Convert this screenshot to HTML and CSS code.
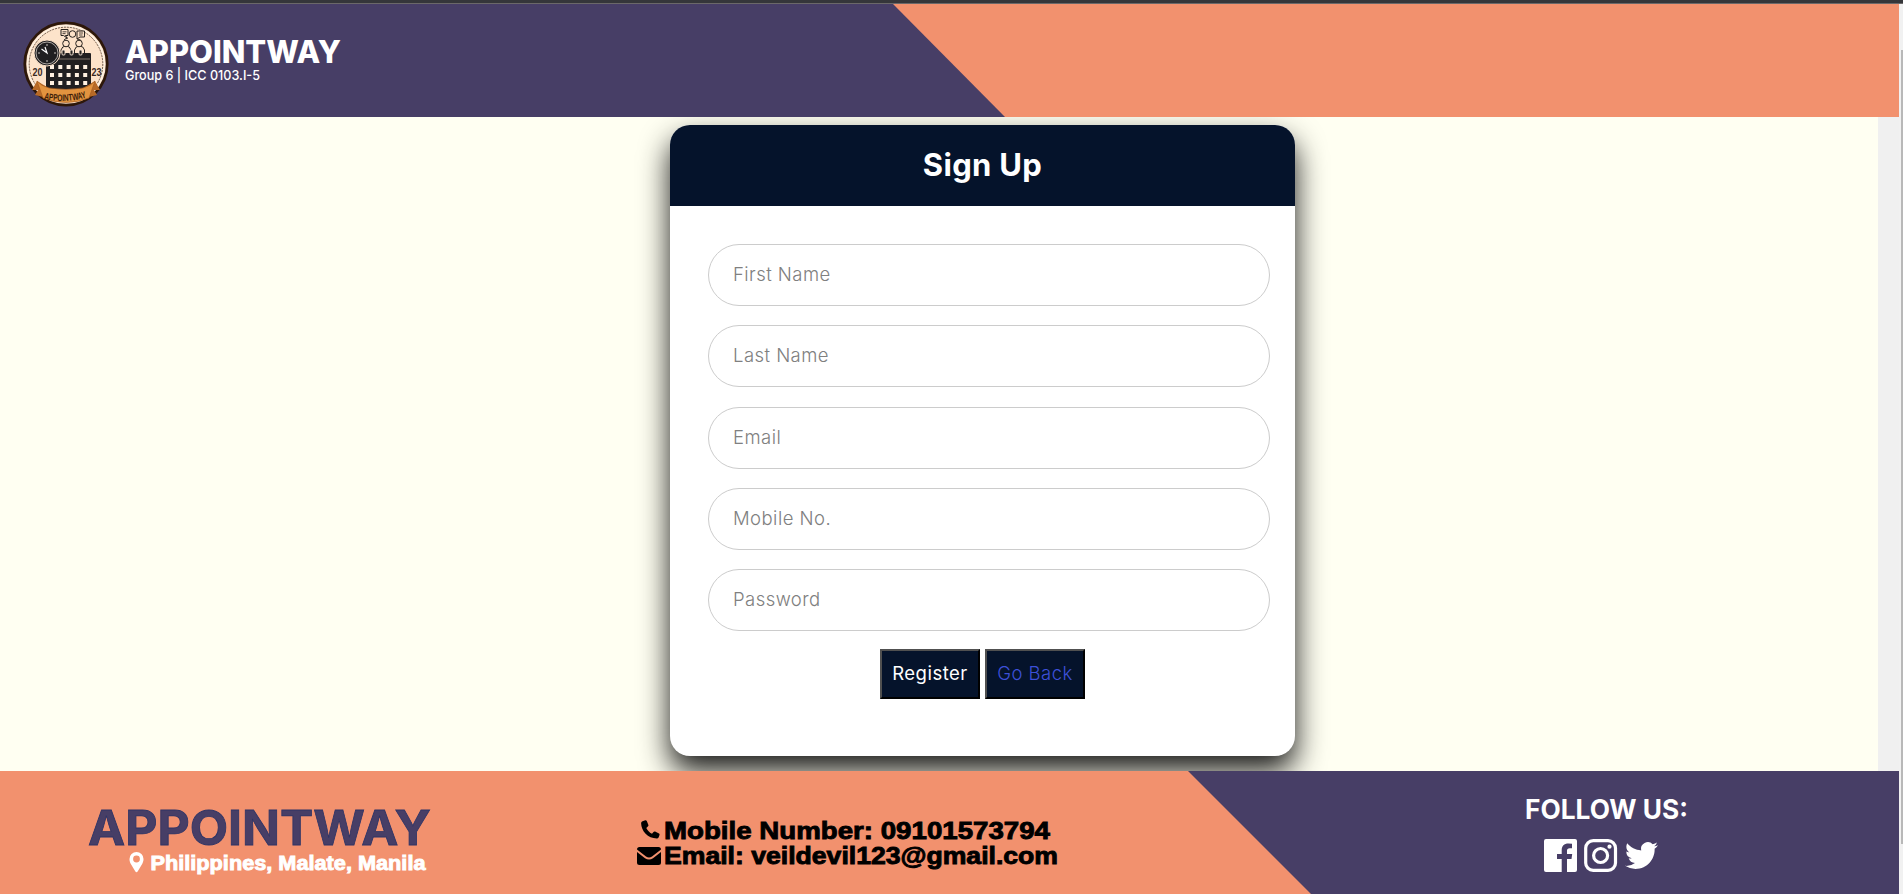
FILE: index.html
```html
<!DOCTYPE html>
<html lang="en">
<head>
<meta charset="utf-8">
<title>Appointway - Sign Up</title>
<link rel="stylesheet" href="styles.css">
</head>
<body>
<div class="window">
  <div class="topline"></div>
  <div class="shell">
    <div class="page">
      <header class="header">
        <svg class="seal" viewBox="0 0 86 86" aria-hidden="true">
          <circle cx="43" cy="43" r="41.2" fill="#fde3ca" stroke="#2d1709" stroke-width="2.8"/>
          <circle cx="43" cy="43" r="38.2" fill="none" stroke="#fff2e2" stroke-width="1.6"/>
          <circle cx="43" cy="43" r="36.8" fill="none" stroke="#4c392b" stroke-width=".8" stroke-dasharray="2 1"/>
          <g fill="#fde3ca" stroke="#29231f" stroke-width="1">
            <path d="M38 8.500h7v6h-2.500l1.500 2.500-3.500-2.500H38z"/>
            <path d="M54 10h7.500v6H57l-3 2z"/>
            <path d="M39.500 10.800h4M39.500 12.600h3M56 12h4M56 14h3.500" stroke-width=".8"/>
            <path d="M41 19q2-2 4-2M54 18q3 0 4.500 2" fill="none"/>
            <circle cx="49.500" cy="13" r="3.300"/>
            <path d="M38 34v-5q1-4 5-4t5 4v5zM51.500 34v-5q1-4 5-4t5 4v5z"/>
            <circle cx="43" cy="22.500" r="3.300"/><circle cx="56" cy="22.500" r="3.300"/>
          </g>
          <rect x="23" y="32" width="45" height="36.500" rx="1" fill="#211f20"/>
          <path d="M24 38h43" stroke="#887d74" stroke-width=".9"/>
          <g fill="#24211f" stroke="#fbe9d8" stroke-width=".9"><rect x="39" y="29" width="3" height="5" rx="1"/><rect x="47" y="29" width="3" height="5" rx="1"/><rect x="56" y="29" width="3" height="5" rx="1"/></g>
          <path d="M27 46h38M27 54h38M27 62h38" stroke="#fff1e1" stroke-width="4" stroke-dasharray="4 4.300"/>
          <circle cx="24" cy="32" r="13" fill="#201f21" stroke="#fde3ca" stroke-width="1"/>
          <circle cx="24" cy="32" r="11" fill="none" stroke="#d3cbc4" stroke-width=".8"/>
          <path d="M24 23v2M24 39v2M15 32h2M31 32h2" stroke="#c9c3be"/>
          <path d="m18.500 28 5.500 4-2-6" fill="none" stroke="#fff" stroke-width="1.200"/>
          <text class="seal-year" x="9.500" y="55" textLength="10" lengthAdjust="spacingAndGlyphs">20</text>
          <text class="seal-year" x="68.500" y="55" textLength="10" lengthAdjust="spacingAndGlyphs">23</text>
          <path d="m14 60-5 9 6 0-3 5 12 3 5-8zM72 60l5 9-6 0 3 5-12 3-5-8z" fill="#b86a27"/>
          <path d="M14 60q4 5 12 7 17 3 34 0 8-2 12-7l-6 17q-23 9-46 0z" fill="#e2933f" stroke="#a75d20" stroke-width=".7"/>
          <path id="ribbon" d="M21 78q22 5 44-2" fill="none"/>
          <text class="seal-name"><textPath href="#ribbon" textLength="43" lengthAdjust="spacingAndGlyphs">APPOINTWAY</textPath></text>
        </svg>
        <svg class="brand" viewBox="0 0 230 52">
          <text class="brand-name" x="1" y="27" textLength="216" lengthAdjust="spacingAndGlyphs">APPOINTWAY</text>
          <text class="brand-group" x="1" y="44" textLength="135" lengthAdjust="spacingAndGlyphs">Group 6 | ICC 0103.I-5</text>
        </svg>
      </header>

      <main class="main">
        <form class="card">
          <h1 class="card-title">Sign Up</h1>
          <div class="fields">
            <input class="field first" type="text" placeholder="First Name">
            <input class="field last" type="text" placeholder="Last Name">
            <input class="field email" type="email" placeholder="Email">
            <input class="field mobile" type="text" placeholder="Mobile No.">
            <input class="field pass" type="password" placeholder="Password">
          </div>
          <div class="actions">
            <button class="btn" type="button">Register</button>
            <button class="btn btn-back" type="button">Go Back</button>
          </div>
        </form>
      </main>

      <footer class="footer">
        <svg class="place" viewBox="0 0 350 70">
          <text class="footer-name" x="0" y="38" textLength="343" lengthAdjust="spacingAndGlyphs">APPOINTWAY</text>
          <path fill="#fff" fill-rule="evenodd" d="M48.500 45a7 7 0 0 1 7 7c0 2-.6 3.300-1.200 4.700l-4.500 7.500q-1.300 2-2.600 0l-4.500-7.500c-.7-1.400-1.200-2.700-1.200-4.700a7 7 0 0 1 7-7zm0 3.600a3.400 3.400 0 1 0 0 6.800 3.400 3.400 0 0 0 0-6.800z"/>
          <text class="footer-place" x="62.500" y="63" textLength="275" lengthAdjust="spacingAndGlyphs">Philippines, Malate, Manila</text>
        </svg>
        <svg class="contact" viewBox="0 0 430 60">
          <path transform="translate(0 -1)" d="M4.500 2.200 7.300 1.200q1-.2 1.500.8l1.600 4q.3.900-.6 1.600L8.300 9c1.300 2.600 3 4.400 5.700 5.700l1.500-1.700q.7-.8 1.600-.4l3.900 1.900q.8.500.5 1.400l-.8 2.300q-.4 1.100-1.500 1.200C10 19.600 3.200 12 3.100 4.200q0-1.500 1.400-2z"/>
          <path transform="translate(-1 0)" d="M2.500 27h19q2.500 0 2.500 2.500l-9 7q-3 2.200-6 0l-9-7Q0 27 2.500 27zM0 32l8 6.200q4 2.600 8 0l8-6.200v10.500q0 2.500-2.500 2.500h-19Q0 45 0 42.500z"/>
          <text class="contact-text" x="26" y="19" textLength="386" lengthAdjust="spacingAndGlyphs">Mobile Number: 09101573794</text>
          <text class="contact-text" x="26" y="44" textLength="394" lengthAdjust="spacingAndGlyphs">Email: veildevil123@gmail.com</text>
        </svg>
        <svg class="social" viewBox="0 0 170 80">
          <text class="follow" x="0" y="23" textLength="163" lengthAdjust="spacingAndGlyphs">FOLLOW US:</text>
          <path fill="#fff" d="M21 43h29q2 0 2 2v29q0 2-2 2h-8V63h4.500l.7-5H42v-3.200c0-1.500.7-2.500 2.700-2.500H47v-4.500q-1.500-.3-3.500-.3c-4.500 0-6.800 2.500-6.800 6.800V58H32v5h4.700v13H21q-2 0-2-2V45q0-2 2-2z"/>
          <g fill="none" stroke="#fff" stroke-width="3.200"><rect x="60.700" y="44.600" width="29.800" height="29.800" rx="7.500"/><circle cx="75.600" cy="59.500" r="7"/></g>
          <circle cx="84.500" cy="50.700" r="2.100" fill="#fff"/>
          <path transform="translate(100 43) scale(1.375)" fill="#fff" d="M23.953 4.570a10 10 0 0 1-2.825.775 4.958 4.958 0 0 0 2.163-2.723c-.951.555-2.005.959-3.127 1.184a4.920 4.920 0 0 0-8.384 4.482C7.690 8.095 4.067 6.130 1.640 3.162a4.822 4.822 0 0 0-.666 2.475c0 1.710.870 3.213 2.188 4.096a4.904 4.904 0 0 1-2.228-.616v.060a4.923 4.923 0 0 0 3.946 4.827 4.996 4.996 0 0 1-2.212.085 4.936 4.936 0 0 0 4.604 3.417 9.867 9.867 0 0 1-6.102 2.105c-.390 0-.779-.023-1.170-.067a13.995 13.995 0 0 0 7.557 2.209c9.053 0 13.998-7.496 13.998-13.985 0-.210 0-.420-.015-.630A9.935 9.935 0 0 0 24 4.590z"/>
        </svg>
      </footer>
    </div>
    <div class="scroll"><div class="thumb"></div></div>
  </div>
</div>
</body>
</html>
```

FILE: styles.css
```css
* { box-sizing: border-box; }
body { margin: 0; background: #fffff2; font-family: Inter, "Noto Sans", sans-serif; overflow: hidden; }
svg { display: block; flex: none; overflow: visible; }
.window { width: 1903px; height: 894px; display: flex; flex-direction: column; }
.topline { height: 4px; background: #35363a; border-bottom: 1px solid #6b6869; }
.shell { display: flex; flex: 1; min-height: 0; }
.page { width: 1899px; display: flex; flex-direction: column; }

.header {
  height: 113px; flex: none; display: flex; align-items: flex-start;
  padding: 17px 0 0 23px; gap: 15px; background: #f2916e;
  position: relative; z-index: 1;
}
.header::before {
  content: ""; position: absolute; inset: 0; z-index: -1; background: #473e66;
  clip-path: polygon(0 0, 893px 0, 1005px 100%, 0 100%);
}
.seal { width: 86px; height: 86px; }
.seal-year { font: 700 11px "Liberation Sans", sans-serif; fill: #39291f; }
.seal-name { font: 700 9.500px "Liberation Sans", sans-serif; fill: #3b1c08; }
.brand { width: 230px; height: 52px; margin-top: 15px; }
.brand-name { font-size: 31px; font-weight: 800; fill: #fff; }
.brand-group { font-size: 13.500px; font-weight: 500; fill: #fff; }

.main {
  height: 654px; flex: none; overflow: hidden; background: #fffff2;
  border-right: 21px solid #f0f0f0; padding: 8px 0 0 670px;
}
.card {
  width: 625px; height: 631px; background: #fff; border-radius: 20px;
  box-shadow: 0 15px 30px rgba(0, 0, 0, .9);
}
.card-title {
  margin: 0; height: 81px; border-radius: 20px 20px 0 0; background: #05132b; color: #fff;
  font-size: 31px; font-weight: 650; line-height: 80px; text-align: center; letter-spacing: .3px;
}
.fields { padding: 38px 25px 0 38px; display: flex; flex-direction: column; gap: 19.300px; }
.field {
  height: 62px; width: 562px; border: 1px solid #ccc; border-radius: 31px; background: #fff;
  padding: 0 24px 2px; font-family: Inter, sans-serif; font-size: 18.500px; letter-spacing: .45px; outline: none;
}
.field::placeholder { color: #808080; font-weight: 350; opacity: 1; }
.actions { display: flex; justify-content: center; gap: 5px; padding-top: 18px; }
.btn {
  width: 100px; height: 50px; padding: 0 0 2px; background: #05132b; color: #fff;
  border: 2px outset #000; border-color: #505050 #000 #000 #505050;
  font-family: Inter, sans-serif; font-size: 18.500px; letter-spacing: .5px; line-height: 44px;
}
.btn-back { color: #3d50d8; font-weight: 350; }

.footer {
  height: 123px; flex: none; position: relative; z-index: 1; background: #473e66;
  display: flex; align-items: flex-start; padding: 36px 0 0 88px;
}
.footer::before {
  content: ""; position: absolute; inset: 0; z-index: -1; background: #f2916e;
  clip-path: polygon(0 0, 1188px 0, 1311px 100%, 0 100%);
}
.place { width: 350px; height: 70px; }
.footer-name { font-size: 48px; font-weight: 700; fill: #473e66; stroke: #2e3466; stroke-width: .8px; }
.footer-place { font: 700 20px "Liberation Sans", sans-serif; fill: #fff; stroke: #fff; stroke-width: .9px; }
.contact { width: 430px; height: 60px; margin: 13px 0 0 200px; }
.contact-text { font: 700 24px "Liberation Sans", sans-serif; fill: #000; stroke: #000; stroke-width: .9px; }
.social { width: 170px; height: 80px; margin: -11px 0 0 457px; }
.follow { font-size: 27px; font-weight: 750; fill: #fff; }
.scroll { width: 4px; background: #f1f1f1; padding: 46px 0 0 2px; }
.thumb { height: 794px; background: #b8b8b8; }
```
